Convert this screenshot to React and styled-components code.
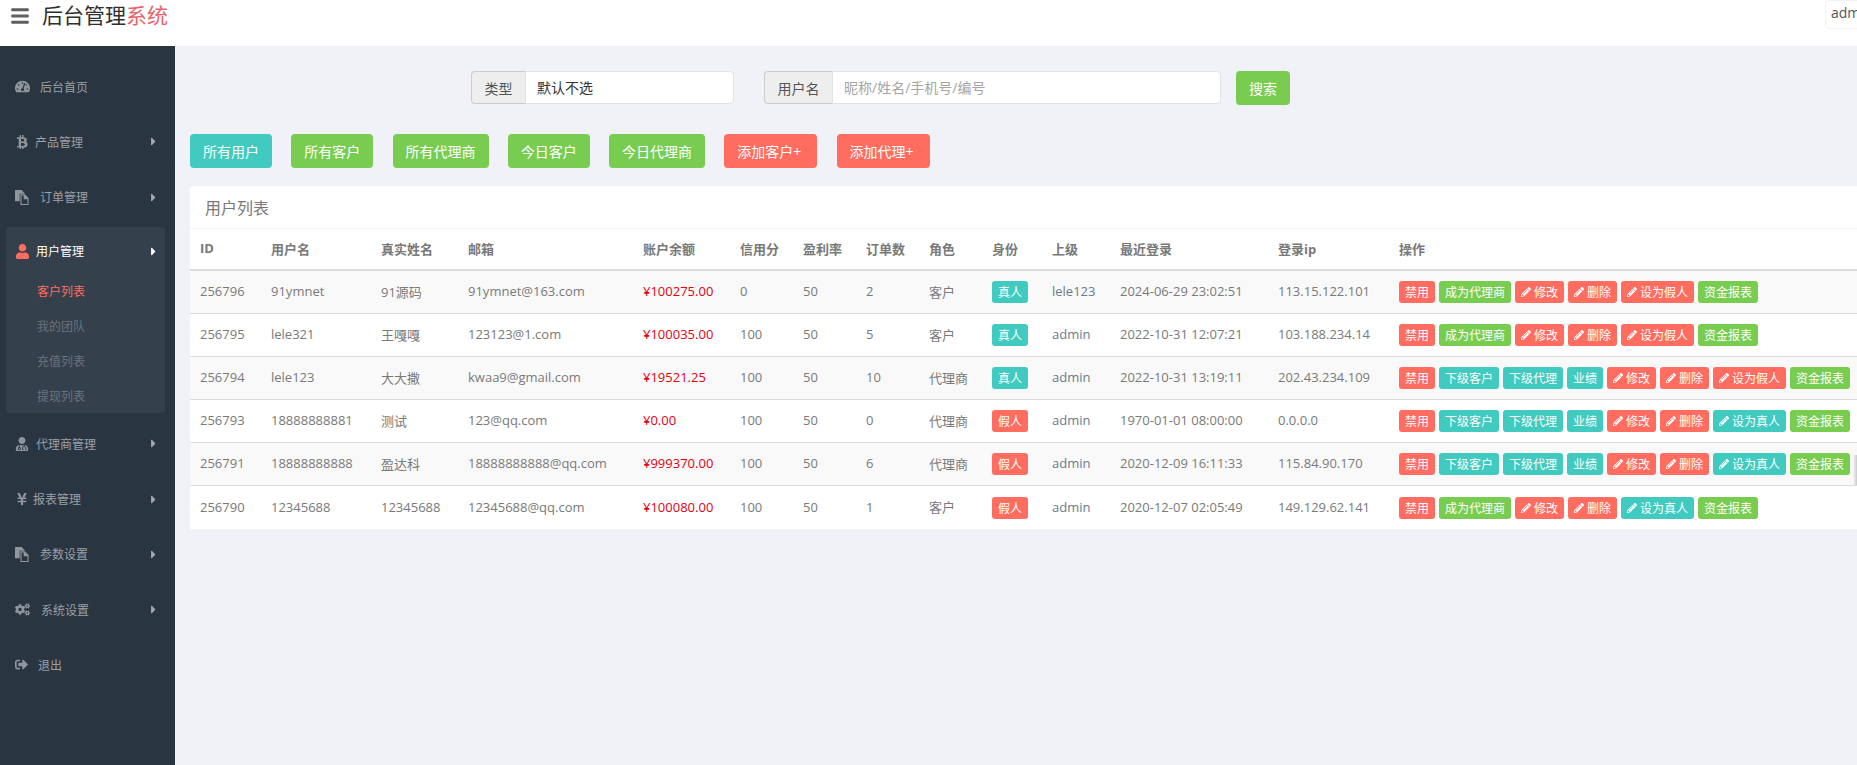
import React from "react";
import styled, { createGlobalStyle } from "styled-components";
import {
  FaBars, FaTachometerAlt, FaBtc, FaUser, FaUserMd, FaYenSign, FaCogs,
  FaSignOutAlt, FaCaretRight, FaPencilAlt,
} from "react-icons/fa";

const FONT = `"Open Sans", "Noto Sans CJK SC", sans-serif`;
const RED = "#ff6c60";
const GREEN = "#78cd51";
const TEAL = "#41cac0";
const tone = { red: RED, green: GREEN, teal: TEAL };

const Global = createGlobalStyle`
  html, body { margin: 0; padding: 0; height: 100%; overflow: hidden; background: #f1f2f7; }
  body { font-family: ${FONT}; font-size: 13px; color: #797979; }
  * { box-sizing: border-box; }
`;

const Page = styled.div`
  position: relative;
  width: 1857px;
  height: 765px;
  display: flex;
  flex-direction: column;
  overflow: hidden;
`;

const Header = styled.header`
  height: 46px;
  flex: none;
  background: #fff;
  display: flex;
  align-items: flex-start;
  padding-left: 10px;
`;

const Burger = styled.span`
  display: flex;
  color: #5f5f5f;
  font-size: 20px;
  margin-top: 6px;
  width: 32px;
  & svg { width: auto; height: 1em; }
`;

const Brand = styled.div`
  font-size: 21px;
  line-height: 31px;
  color: #2f2f2f;
`;

const BrandAccent = styled.span`
  color: #e8646a;
`;

const UserBox = styled.div`
  margin-left: auto;
  width: 120px;
  height: 29px;
  flex: none;
  padding: 3px 5px;
  margin-right: -88px;
  background: #fff;
  border: 1px solid #f1f2f7;
  border-radius: 4px;
  font-size: 14px;
  line-height: 18px;
  color: #555;
`;

const Body = styled.div`
  flex: 1;
  display: flex;
  min-height: 0;
`;

const Sidebar = styled.nav`
  width: 175px;
  flex: none;
  background: #2a3542;
  padding-top: 13px;
`;

const NavItem = styled.div`
  height: 55.25px;
  padding: 0 15px;
  display: flex;
  align-items: center;
  font-size: 12px;
  color: #9aa0a7;
`;

const NavIcon = styled.span`
  width: ${(p) => p.$w}px;
  flex: none;
  display: flex;
  align-items: center;
  font-size: ${(p) => p.$s || 15}px;
  color: ${(p) => p.$c || "#8f959c"};
  & svg { width: auto; height: 1em; }
`;

const Caret = styled.span`
  margin-left: auto;
  display: flex;
  font-size: 13px;
  color: ${(p) => (p.$on ? "#fff" : "#a3a8ae")};
`;

const ActiveGroup = styled.div`
  margin: 2px 10px 3.5px 6px;
  height: 186px;
  background: #35404d;
  border-radius: 4px;
`;

const ActiveHead = styled.div`
  height: 47px;
  padding: 2px 5px 0 9px;
  display: flex;
  align-items: center;
  font-size: 12px;
  color: #fff;
`;

const SubLink = styled.div`
  height: 35px;
  padding-left: 31px;
  display: flex;
  align-items: center;
  font-size: 12px;
  color: ${(p) => (p.$on ? RED : "#68737f")};
`;

const Main = styled.main`
  flex: 1;
  min-width: 0;
  padding: 25px 0 0 15px;
  background: #f1f2f7;
`;

const SearchRow = styled.form`
  display: flex;
  margin-left: 281px;
  height: 34px;
`;

const Group = styled.div`
  display: flex;
  width: ${(p) => p.$w}px;
  height: 33px;
  margin-right: ${(p) => p.$mr}px;
`;

const Addon = styled.span`
  display: flex;
  align-items: center;
  justify-content: center;
  flex: none;
  width: ${(p) => p.$w}px;
  background: #eee;
  border: 1px solid #ccc;
  border-right: 0;
  border-radius: 4px 0 0 4px;
  font-size: 14px;
  color: #555;
`;

const Select = styled.select`
  flex: 1;
  min-width: 0;
  appearance: none;
  background: #fff;
  border: 1px solid #e2e2e4;
  border-radius: 0 4px 4px 0;
  padding: 0 11px;
  font: 14px ${FONT};
  color: #333;
  outline: none;
`;

const TextInput = styled.input`
  flex: 1;
  min-width: 0;
  background: #fff;
  border: 1px solid #e2e2e4;
  border-radius: 0 4px 4px 0;
  padding: 0 11px;
  font: 14px ${FONT};
  outline: none;
  &::placeholder { color: #a5a5a5; opacity: 1; }
`;

const BigButton = styled.button`
  height: 34px;
  padding: ${(p) => (p.$plus ? "0 16px 0 13px" : "0 13px")};
  border: 0;
  border-radius: 4px;
  background: ${(p) => tone[p.$tone]};
  color: #fff;
  font: 14px ${FONT};
  white-space: nowrap;
`;

const ButtonRow = styled.div`
  display: flex;
  gap: 19.25px;
  margin-top: 29px;
`;

const Panel = styled.section`
  margin-top: 18px;
  background: #fff;
  border-radius: 4px 0 0 4px;
`;

const PanelHead = styled.div`
  height: 43px;
  padding: 0 15px;
  display: flex;
  align-items: center;
  font-size: 16px;
  color: #797979;
  border-bottom: 1px solid #eff2f7;
`;

const Table = styled.table`
  width: 100%;
  table-layout: fixed;
  border-collapse: separate;
  border-spacing: 0;
  font-size: 13px;
`;

const Col = styled.col`
  width: ${(p) => p.$w}px;
`;

const Th = styled.th`
  height: 42px;
  padding: 0 10px 2px;
  text-align: left;
  font-weight: 700;
  color: #797979;
  border-bottom: 2px solid #ddd;
  white-space: nowrap;
`;

const Tr = styled.tr`
  background: ${(p) => (p.$odd ? "#f9f9f9" : "#fff")};
  &:not(:last-child) td { border-bottom: 1px solid #ddd; }
`;

const Td = styled.td`
  height: 43px;
  padding: 0 10px 2px;
  color: #797979;
  white-space: nowrap;
`;

const Money = styled.span`
  color: #e60012;
`;

const Boss = styled.span`
  color: #6a7b8d;
`;

const Actions = styled.div`
  display: flex;
  gap: 4px;
  width: max-content;
  margin-top: 2px;
`;

const Tag = styled.span`
  display: inline-flex;
  align-items: center;
  justify-content: center;
  gap: 3px;
  height: 22px;
  padding: 0 6px;
  border-radius: 3px;
  font-size: 12px;
  color: #fff;
  white-space: nowrap;
  background: ${(p) => tone[p.$tone]};
`;

const PencilGlyph = styled(FaPencilAlt)`
  font-size: 10px;
`;

const EdgeShade = styled.div`
  position: absolute;
  right: 0;
  top: 455px;
  width: 4px;
  height: 30px;
  background: linear-gradient(to right, rgba(200, 200, 200, 0), rgba(190, 190, 190, 0.8));
`;

function FilesIcon() {
  return (
    <svg viewBox="0 0 15 16" fill="currentColor" width="15" height="16">
      <path d="M0 0h7l3.2 3.2V4H5v8H0z" />
      <path d="M5.8 4.6h4.7l4 4V16H5.8zM7 5.8v9h6.3V9.8h-4V5.8z" fillRule="evenodd" />
    </svg>
  );
}

const columns = [71, 110, 87, 175, 97, 63, 63, 63, 63, 60, 68, 158, 121];
const headers = ["ID", "用户名", "真实姓名", "邮箱", "账户余额", "信用分", "盈利率", "订单数", "角色", "身份", "上级", "最近登录", "登录ip", "操作"];

const rows = [
  ["256796", "91ymnet", "91源码", "91ymnet@163.com", "¥100275.00", "0", "50", "2", "客户", false, "lele123", "2024-06-29 23:02:51", "113.15.122.101"],
  ["256795", "lele321", "王嘎嘎", "123123@1.com", "¥100035.00", "100", "50", "5", "客户", false, "admin", "2022-10-31 12:07:21", "103.188.234.14"],
  ["256794", "lele123", "大大撒", "kwaa9@gmail.com", "¥19521.25", "100", "50", "10", "代理商", false, "admin", "2022-10-31 13:19:11", "202.43.234.109"],
  ["256793", "18888888881", "测试", "123@qq.com", "¥0.00", "100", "50", "0", "代理商", true, "admin", "1970-01-01 08:00:00", "0.0.0.0"],
  ["256791", "18888888888", "盈达科", "18888888888@qq.com", "¥999370.00", "100", "50", "6", "代理商", true, "admin", "2020-12-09 16:11:33", "115.84.90.170"],
  ["256790", "12345688", "12345688", "12345688@qq.com", "¥100080.00", "100", "50", "1", "客户", true, "admin", "2020-12-07 02:05:49", "149.129.62.141"],
];

function RowActions({ agent, fake }) {
  return (
    <Actions>
      <Tag $tone="red">禁用</Tag>
      {agent ? (
        <>
          <Tag $tone="teal">下级客户</Tag>
          <Tag $tone="teal">下级代理</Tag>
          <Tag $tone="teal">业绩</Tag>
        </>
      ) : (
        <Tag $tone="green">成为代理商</Tag>
      )}
      <Tag $tone="red"><PencilGlyph />修改</Tag>
      <Tag $tone="red"><PencilGlyph />删除</Tag>
      <Tag $tone={fake ? "teal" : "red"}><PencilGlyph />{fake ? "设为真人" : "设为假人"}</Tag>
      <Tag $tone="green">资金报表</Tag>
    </Actions>
  );
}

function Item({ icon: Icon, w, s, label, caret = true }) {
  return (
    <NavItem>
      <NavIcon $w={w} $s={s}><Icon /></NavIcon>
      {label}
      {caret && <Caret><FaCaretRight /></Caret>}
    </NavItem>
  );
}

export default function App() {
  return (
    <Page>
      <Global />
      <Header>
        <Burger><FaBars /></Burger>
        <Brand>后台管理<BrandAccent>系统</BrandAccent></Brand>
        <UserBox>admin</UserBox>
      </Header>
      <Body>
        <Sidebar>
          <Item icon={FaTachometerAlt} w={25} s={15} label="后台首页" caret={false} />
          <Item icon={FaBtc} w={20} s={14.5} label="产品管理" />
          <Item icon={FilesIcon} w={25} label="订单管理" />
          <ActiveGroup>
            <ActiveHead>
              <NavIcon $w={21} $c={RED}><FaUser /></NavIcon>
              用户管理
              <Caret $on><FaCaretRight /></Caret>
            </ActiveHead>
            <SubLink $on>客户列表</SubLink>
            <SubLink>我的团队</SubLink>
            <SubLink>充值列表</SubLink>
            <SubLink>提现列表</SubLink>
          </ActiveGroup>
          <Item icon={FaUserMd} w={21} s={14} label="代理商管理" />
          <Item icon={FaYenSign} w={18} s={14} label="报表管理" />
          <Item icon={FilesIcon} w={25} label="参数设置" />
          <Item icon={FaCogs} w={26} s={15} label="系统设置" />
          <Item icon={FaSignOutAlt} w={23} s={13} label="退出" caret={false} />
        </Sidebar>
        <Main>
          <SearchRow>
            <Group $w={263} $mr={30}>
              <Addon $w={54}>类型</Addon>
              <Select defaultValue="0"><option value="0">默认不选</option></Select>
            </Group>
            <Group $w={457} $mr={15}>
              <Addon $w={68}>用户名</Addon>
              <TextInput placeholder="昵称/姓名/手机号/编号" />
            </Group>
            <BigButton type="button" $tone="green">搜索</BigButton>
          </SearchRow>
          <ButtonRow>
            <BigButton $tone="teal">所有用户</BigButton>
            <BigButton $tone="green">所有客户</BigButton>
            <BigButton $tone="green">所有代理商</BigButton>
            <BigButton $tone="green">今日客户</BigButton>
            <BigButton $tone="green">今日代理商</BigButton>
            <BigButton $tone="red" $plus>添加客户+</BigButton>
            <BigButton $tone="red" $plus>添加代理+</BigButton>
          </ButtonRow>
          <Panel>
            <PanelHead>用户列表</PanelHead>
            <Table>
              <colgroup>
                {columns.map((w, i) => <Col key={i} $w={w} />)}
                <col />
              </colgroup>
              <thead>
                <tr>{headers.map((h) => <Th key={h}>{h}</Th>)}</tr>
              </thead>
              <tbody>
                {rows.map((r, i) => (
                  <Tr key={r[0]} $odd={i % 2 === 0}>
                    <Td>{r[0]}</Td>
                    <Td>{r[1]}</Td>
                    <Td>{r[2]}</Td>
                    <Td>{r[3]}</Td>
                    <Td><Money>{r[4]}</Money></Td>
                    <Td>{r[5]}</Td>
                    <Td>{r[6]}</Td>
                    <Td>{r[7]}</Td>
                    <Td>{r[8]}</Td>
                    <Td><Actions><Tag $tone={r[9] ? "red" : "teal"}>{r[9] ? "假人" : "真人"}</Tag></Actions></Td>
                    <Td><Boss>{r[10]}</Boss></Td>
                    <Td>{r[11]}</Td>
                    <Td>{r[12]}</Td>
                    <Td><RowActions agent={r[8] === "代理商"} fake={r[9]} /></Td>
                  </Tr>
                ))}
              </tbody>
            </Table>
          </Panel>
        </Main>
      </Body>
      <EdgeShade />
    </Page>
  );
}
